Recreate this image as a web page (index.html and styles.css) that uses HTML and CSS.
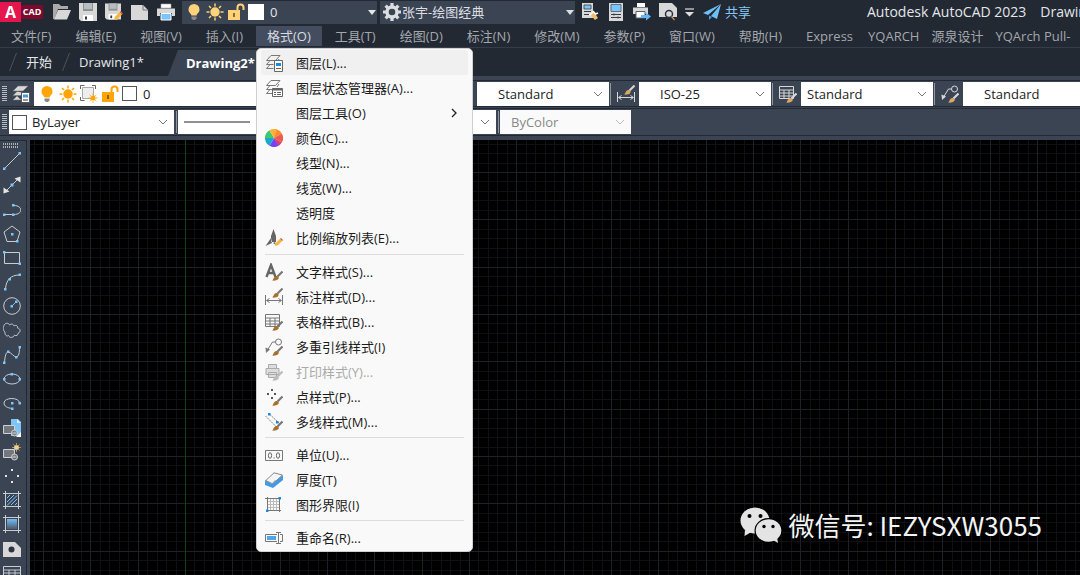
FILE: index.html
```
<!DOCTYPE html>
<html lang="zh-CN">
<head>
<meta charset="utf-8">
<title>Autodesk AutoCAD 2023</title>
<link rel="stylesheet" href="styles.css">
</head>
<body>
<svg class="defs" aria-hidden="true">
  <defs>
    <symbol id="brush" viewBox="0 0 18 18"><path d="M17.500 8.500L12.500 13.500" stroke="currentColor" stroke-width="2.200" fill="none"/><path d="M7 17.500c1.700-.6 1.300-4 4.300-4.600 2 0 3.200 1.600 2 3.200-1.400 1.600-4.400 1.700-6.300 1.400z" class="tan"/></symbol>
    <symbol id="bulb" viewBox="0 0 18 18"><path d="M9 1a5.500 5.500 0 0 0-5.500 5.500c0 3 2.500 3.800 3 6h5c.5-2.200 3-3 3-6A5.500 5.500 0 0 0 9 1z" fill="currentColor"/><path d="M6.500 13.500h5v2l-1.500 1.500H8l-1.500-1.500z" fill="#888"/></symbol>
    <symbol id="sun" viewBox="0 0 18 18"><circle cx="9" cy="9" r="4.700" fill="currentColor"/><path d="M9 .5v3M9 14.500v3M.5 9h3M14.500 9h3M3 3l2 2M13 13l2 2M15 3l-2 2M5 13l-2 2" stroke="currentColor" stroke-width="1.500"/></symbol>
    <symbol id="lock" viewBox="0 0 18 18"><path d="M1 7h12v10H1z" fill="currentColor"/><path d="M10.500 7V4.500a3 3 0 0 1 6 0V7" fill="none" stroke="currentColor" stroke-width="2"/><path d="M7 10v4" stroke="#6b5320" stroke-width="1.600"/></symbol>
    <symbol id="chev" viewBox="0 0 10 6"><path d="M1 1l4 4 4-4" fill="none" stroke="currentColor"/></symbol>
    <symbol id="tri" viewBox="0 0 8 5"><path d="M0 0h8L4 5z" fill="currentColor"/></symbol>
    <symbol id="layers" viewBox="0 0 18 18"><path d="M6 1.500h9L10.500 6.500h-9zM5 6.500l-3.500 4h7M5 10.500l-3.500 4h7" fill="none" stroke="currentColor"/><path d="M14 5l-2 3" stroke="currentColor"/></symbol>
    <symbol id="dim" viewBox="0 0 18 18"><path d="M.5 7v10M17.500 7v10M2 12.500h14M4.500 10.500l-3 2 3 2M13.500 10.500l3 2-3 2" fill="none" stroke="currentColor"/><path d="M17.500.500l-5 5" stroke="currentColor" stroke-width="2"/><path d="M7 9.500c1.700-.6 1.400-4 4.300-4.500 2 0 3 1.600 1.800 3.200C11.800 9.700 8.800 9.800 7 9.500z" class="tan"/></symbol>
    <symbol id="table" viewBox="0 0 18 18"><path d="M.5 1.500h14v12H.5zM.5 5h14M.5 8h14M.5 11h14M5 5v8.500M10 5v8.500" fill="none" stroke="currentColor"/></symbol>
    <symbol id="mleader" viewBox="0 0 18 18"><circle cx="13.500" cy="4" r="3" fill="none" stroke="currentColor"/><path d="M10.500 4H7.500L2.500 12" fill="none" stroke="currentColor"/><path d="M.500 9.500l4.500 2-4 3.500z" fill="currentColor"/></symbol>
    <symbol id="printer" viewBox="0 0 18 18"><path d="M4 1h10v4H4z" fill="#fff" stroke="#aaa" stroke-width=".6"/><path d="M0 5.500h18V13h-3v-3H3v3H0z" fill="currentColor"/><path d="M4 10.500h10V17H4z" fill="#7ac4ff" stroke="#fff"/></symbol>
    <symbol id="block" viewBox="0 0 18 18"><path d="M.5 6.500h11v8H.5z" fill="#74777d" stroke="#d0d0d0"/><circle cx="11.500" cy="14" r="3" fill="#74777d" fill-opacity=".8" stroke="#d0d0d0"/><path d="M9.500 14h4" stroke="#d0d0d0"/></symbol>
    <symbol id="floppy" viewBox="0 0 18 18"><path d="M0 0h18v18H2l-2-2z" fill="currentColor"/><path d="M4 0h10v8H4z" fill="#8d9094"/><path d="M5 0h8v6H5z" fill="#b9bcc0"/><path d="M4 12h10v6H4z" fill="#fff"/><path d="M6 13.500h2v3H6z" fill="#333a45"/></symbol>
    <symbol id="pencil" viewBox="0 0 8 8"><path d="M0 8l.8-3L5 .8 7.200 3 3 7.200z" fill="#f5b83d"/><path d="M5 .8L6 0l2 2-.8 1z" fill="#e8484a"/></symbol>
    <pattern id="grid" x="13" y="32" width="142" height="142" patternUnits="userSpaceOnUse">
      <path d="M9.500 0v142M19.500 0v142M28.500 0v142M38.500 0v142M57.500 0v142M66.500 0v142M76.500 0v142M85.500 0v142M104.500 0v142M114.500 0v142M123.500 0v142M133.500 0v142M0 9.500h142M0 19.500h142M0 28.500h142M0 38.500h142M0 57.500h142M0 66.500h142M0 76.500h142M0 85.500h142M0 104.500h142M0 114.500h142M0 123.500h142M0 133.500h142" stroke="#0f1014"/>
      <path d="M.5 0v142M47.500 0v142M95.500 0v142M0 .5h142M0 47.500h142M0 95.500h142" stroke="#1e202a"/>
    </pattern>
    <linearGradient id="fade" x1="0" y1="0" x2="0" y2="1"><stop offset="0" stop-color="#72bdf5"/><stop offset="1" stop-color="#4f5a6a"/></linearGradient>
  </defs>
</svg>

<div class="app">
  <header class="titlebar">
    <button class="logo" aria-label="AutoCAD"><span class="logo-a">A</span><span class="logo-cad">CAD</span></button>
    <div class="quick">
      <button aria-label="打开"><svg viewBox="0 0 18 18"><path d="M0 16V1h6l2 2h7v3H5L1.500 16z" fill="#aaa"/><path d="M5 7h13l-4 9.500H1z" fill="#d8d8d8"/></svg></button>
      <button aria-label="保存"><svg><use href="#floppy"/></svg></button>
      <button aria-label="另存为"><svg viewBox="0 0 18 18"><use href="#floppy" width="16" height="17"/><use href="#pencil" x="9" y="8" width="9" height="9"/></svg></button>
      <button aria-label="新建"><svg viewBox="0 0 18 18"><path d="M0 2h12l5 5v10H0z" fill="#d8d8d8"/><path d="M12 2v5h5" fill="none" stroke="#777"/></svg></button>
      <button aria-label="打印"><svg><use href="#printer"/></svg></button>
    </div>
    <button class="combo">
      <svg class="amber"><use href="#bulb"/></svg><svg class="amber"><use href="#sun"/></svg><svg class="amber"><use href="#lock"/></svg><i class="swatch"></i><span>0</span><svg class="tri"><use href="#tri"/></svg>
    </button>
    <button class="combo workspace">
      <svg viewBox="0 0 18 18"><circle cx="9" cy="9" r="5" fill="none" stroke="currentColor" stroke-width="3.400"/><path d="M9 0v3M9 15v3M0 9h3M15 9h3M2.600 2.600l2.200 2.200M13.200 13.200l2.200 2.200M15.400 2.600l-2.200 2.200M4.800 13.200l-2.200 2.200" stroke="currentColor" stroke-width="3.200"/></svg><span>张宇-绘图经典</span><svg class="tri"><use href="#tri"/></svg>
    </button>
    <div class="quick second">
      <button aria-label="特性匹配"><svg viewBox="0 0 18 18"><path d="M1 0h11v15H1z" fill="#d8d8d8"/><path d="M3 2h7v4H3z" fill="#7ac4ff" stroke="#333a45" stroke-width=".8"/><path d="M3 8.500h7M3 11.500h5" stroke="#333a45"/><path d="M8.500 11l5.500 6 3-2-4-6z" fill="#f0c070"/><path d="M8.500 12.500l4-4 2 2.500 2.500-1" fill="none" stroke="#fff" stroke-width="1.500"/></svg></button>
      <button aria-label="特性"><svg viewBox="0 0 18 18"><path d="M2 0h14v18H2z" fill="#d8d8d8"/><path d="M4 1.500h10v7H4z" fill="#7ac4ff" stroke="#3d4a5c" stroke-width=".7"/><path d="M4 11.500h10M4 14.500h10M7 10.500v2M11 13.500v2" stroke="#333a45"/></svg></button>
      <button aria-label="批处理打印"><svg viewBox="0 0 18 18"><path d="M4 0h8v4H4z" fill="#fff"/><path d="M0 4.500h15V11H0z" fill="#d8d8d8"/><path d="M3 8.500h9V15H3z" fill="#fff" stroke="#59616d"/><path d="M8 12h5V9.500l5 4-5 4V15H8z" fill="#64b6f7"/></svg></button>
      <button aria-label="打印预览"><svg viewBox="0 0 18 18"><path d="M0 0h13l5 5v9H0z" fill="#d8d8d8"/><circle cx="10" cy="11" r="3.500" fill="#d8d8d8" stroke="#2a313c" stroke-width="1.500"/><path d="M12.500 13.500l3 3.500" stroke="#b98a53" stroke-width="1.500"/></svg></button>
      <button class="more" aria-label="更多"><svg viewBox="0 0 9 9"><path d="M0 1h9" stroke="#ddd" stroke-width="1.200"/><path d="M0 4h9L4.500 8.500z" fill="#ddd"/></svg></button>
    </div>
    <button class="share"><svg viewBox="0 0 18 18"><path d="M18 1L0 10l5 2L18 1 8 13l6 3z" fill="#6fc0f8"/><path d="M6 12.500V17l3-3z" fill="#4a9bd8"/></svg><span>共享</span></button>
    <h1>Autodesk AutoCAD 2023</h1><span class="file">Drawing</span>
  </header>

  <nav class="menubar">
    <button>文件(F)</button><button>编辑(E)</button><button>视图(V)</button><button>插入(I)</button><button class="open" aria-expanded="true">格式(O)</button><button>工具(T)</button><button>绘图(D)</button><button>标注(N)</button><button>修改(M)</button><button>参数(P)</button><button>窗口(W)</button><button>帮助(H)</button><button class="express">Express</button><button class="tight">YQARCH</button><button class="tight">源泉设计</button><button class="tight">YQArch Pull-</button>
  </nav>

  <div class="tabs">
    <svg class="slash" viewBox="0 0 8 18"><path d="M7.500 0L.5 18" stroke="#4a5361"/></svg><button class="start">开始</button>
    <svg class="slash" viewBox="0 0 8 18"><path d="M7.500 0L.5 18" stroke="#4a5361"/></svg><button class="drawing">Drawing1*</button>
    <button class="active">Drawing2*</button>
  </div>

  <div class="toolbar">
    <i class="grip"></i>
    <button class="tool" aria-label="图层特性"><svg viewBox="0 0 18 18"><path d="M6 1h10l-5 5H1zM5 6.500L1 10.500h9l2-2.500M5 11l-4 4h8" fill="#d8d8d8" stroke="#777" stroke-width=".6"/><path d="M9.500 7.500h8v10h-8z" fill="#fff" stroke="#555"/><path d="M11 9.500h5v3h-5z" fill="#3f9be5"/><path d="M11 15h5" stroke="#333"/></svg></button>
    <div class="pick layer">
      <svg class="orange"><use href="#bulb"/></svg><svg class="orange"><use href="#sun"/></svg><svg class="orange" viewBox="0 0 18 18"><path d="M2.500 2.500h11v11h-11z" fill="#eee" stroke="#aaa"/><path d="M.5 4V.500h4M12 .5h3.500V4M.5 12v3.500h4" stroke="#666" fill="none"/><use href="#sun" x="8" y="8" width="10" height="10"/></svg><svg class="orange"><use href="#lock"/></svg><i class="box"></i>
      <select aria-label="图层"><option>0</option></select>
    </div>
    <button class="tool" aria-label="文字样式"><svg viewBox="0 0 18 18"><use href="#brush"/></svg></button>
    <div class="pick style"><select aria-label="文字样式"><option>Standard</option></select><svg class="chev"><use href="#chev"/></svg></div>
    <i class="bar"></i>
    <button class="tool" aria-label="标注样式"><svg><use href="#dim"/></svg></button>
    <div class="pick style"><select aria-label="标注样式"><option>ISO-25</option></select><svg class="chev"><use href="#chev"/></svg></div>
    <i class="bar"></i>
    <button class="tool" aria-label="表格样式"><svg viewBox="0 0 18 18"><use href="#table"/><use href="#brush"/></svg></button>
    <div class="pick style near"><select aria-label="表格样式"><option>Standard</option></select><svg class="chev"><use href="#chev"/></svg></div>
    <i class="bar"></i>
    <button class="tool" aria-label="多重引线样式"><svg viewBox="0 0 18 18"><use href="#mleader"/><use href="#brush"/></svg></button>
    <div class="pick style"><select aria-label="多重引线样式"><option>Standard</option></select><svg class="chev"><use href="#chev"/></svg></div>
  </div>

  <div class="toolbar props">
    <i class="grip"></i>
    <div class="pick color"><i class="box"></i><select aria-label="颜色"><option>ByLayer</option></select><svg class="chev"><use href="#chev"/></svg></div>
    <i class="bar"></i>
    <div class="pick line"><svg viewBox="0 0 66 2"><path d="M0 1h66" stroke="#222"/></svg><select aria-label="线型"><option>ByLayer</option></select></div>
    <i class="bar"></i>
    <div class="pick line"><svg viewBox="0 0 66 2"><path d="M0 1h66" stroke="#222"/></svg><select aria-label="线宽"><option>ByLayer</option></select><svg class="chev"><use href="#chev"/></svg></div>
    <i class="bar"></i>
    <div class="pick plot"><select aria-label="打印样式" disabled><option>ByColor</option></select><svg class="chev"><use href="#chev"/></svg></div>
  </div>

  <main class="work">
    <aside class="draw">
      <svg class="flat" viewBox="0 0 16 5"><path d="M0 1h16M0 4h16" stroke="#d0d3d8" stroke-width="1.500" stroke-dasharray="1 1"/></svg>
      <div class="tools">
        <button aria-label="直线"><svg viewBox="0 0 18 18"><path d="M1.500 16.500l15-15"/><path class="dot" d="M0 15.500h2.500V18H0zM15.500 0H18v2.500h-2.500z"/></svg></button>
        <button aria-label="构造线"><svg viewBox="0 0 18 18"><path d="M2 16L16 2"/><path class="solid" d="M17.500.500v6l-6-4zM.500 17.500v-6l6 4z"/><path class="dot" d="M7.500 7.500h3v3h-3z"/></svg></button>
        <button aria-label="多段线"><svg viewBox="0 0 18 18"><path d="M1 13.500h10c9 0 9-9 0-9"/><path class="dot" d="M0 12.500h2.500V15H0zM9 12.500h2.500V15H9zM9 3h2.500v2.500H9z"/></svg></button>
        <button aria-label="多边形"><svg viewBox="0 0 18 18"><path d="M9 1l8 6-3 9.500H4L1 7z"/><path class="dot" d="M8 8h2.500v2.500H8zM13 15h2.500v2.500H13z"/></svg></button>
        <button aria-label="矩形"><svg viewBox="0 0 18 18"><path d="M1.500 3.500h15v11h-15z"/><path class="dot" d="M0 2h2.500v2.500H0zM15.500 13.500H18V16h-2.500z"/></svg></button>
        <button aria-label="圆弧"><svg viewBox="0 0 18 18"><path d="M2.500 16C3 7 8 2 16 2"/><path class="dot" d="M1 15h2.500v2.500H1zM5.500 5H8v2.500H5.500zM15.500.500H18V3h-2.500z"/></svg></button>
        <button aria-label="圆"><svg viewBox="0 0 18 18"><circle cx="9" cy="9" r="8.300"/><path d="M9 9l4-4" class="blue"/><path class="dot" d="M7.500 8H10v2.500H7.500zM12 3.500h2.500V6H12z"/></svg></button>
        <button aria-label="修订云线"><svg viewBox="0 0 18 18"><path d="M2 10C-.500 8 0 5 1.500 2.500 3 .500 6 1 6.500 3c2-1.800 4-.8 4.500 1 2-1.500 4 0 3.500 2 3 .500 3.500 4 .7 5.200 0 2-2 3-3.700 2-1.500 2.800-5 3-6 .3C3.500 15 1.500 12.500 2 10z"/></svg></button>
        <button aria-label="样条曲线"><svg viewBox="0 0 18 18"><path d="M1.500 16.500C2 10 3 6 5 6c3 0 6 5 8 5 3 0 3.500-5 3.500-9"/><path class="dot" d="M0 15.500h2.500V18H0zM4 4.500h2.500V7H4zM12 10h2.500v2.500H12zM15.500 0H18v2.500h-2.500z"/></svg></button>
        <button aria-label="椭圆"><svg viewBox="0 0 18 18"><ellipse cx="9" cy="9" rx="8" ry="5"/><path class="dot" d="M0 8h2.500v2.500H0zM15.500 8H18v2.500h-2.500zM7.500 3H10v2.500H7.500z"/></svg></button>
        <button aria-label="椭圆弧"><svg viewBox="0 0 18 18"><path d="M16.500 9c0-6-15.500-6-15.500 0 0 3 3 5 8.500 5.500"/><path class="dot" d="M15.500 8H18v2.500h-2.500zM8 8h2.500v2.500H8zM8 13.500h2.500V16H8z"/></svg></button>
        <button aria-label="插入块"><svg viewBox="0 0 18 18"><path d="M8 0h7l3 3v14H8z" fill="#7cc5fb" stroke="none"/><path d="M14 0l4 4h-4z" fill="#d7eeff" stroke="none"/><use href="#block"/><path d="M18 13v5h-5z" fill="#fff" stroke="none"/></svg></button>
        <button aria-label="创建块"><svg viewBox="0 0 18 18"><use href="#block"/><g class="amber"><use href="#sun" x="9" y="0" width="9" height="9"/></g></svg></button>
        <button aria-label="点"><svg viewBox="0 0 18 18"><path class="solid" d="M8 2h2v2H8zM8 14h2v2H8zM2 8h2v2H2zM14 8h2v2h-2z"/></svg></button>
        <button aria-label="图案填充"><svg viewBox="0 0 18 18"><path d="M0 2.500h18M0 15.500h18M2.500 0v18M15.500 0v18"/><path class="blue" d="M4 7l3-3M4 11l7-7M4 14.500L14 4.500M8 14l6-6M12 14l2-2"/></svg></button>
        <button aria-label="渐变色"><svg viewBox="0 0 18 18"><path d="M4 4h10v10H4z" fill="url(#fade)" stroke="none"/><path d="M0 2.500h18M0 15.500h18M2.500 0v18M15.500 0v18"/></svg></button>
        <button aria-label="面域"><svg viewBox="0 0 18 18"><path d="M0 2h12l6 6v9H0z" fill="#d8d8d8" stroke="none"/><circle cx="8.500" cy="9.500" r="3" fill="#2c3440" stroke="none"/></svg></button>
        <button aria-label="表格"><svg viewBox="0 0 18 18"><path d="M.500 2.500h17v14H.5zM0 6h18M0 9h18M0 12.500h18M6 6v10M12 6v10"/></svg></button>
      </div>
    </aside>
    <section class="canvas">
      <svg class="sheet" aria-hidden="true"><rect width="100%" height="100%" fill="url(#grid)"/><path d="M155.500 0v2000" stroke="#164015"/></svg>
      <div class="watermark">
        <svg viewBox="0 0 42 36"><ellipse cx="15" cy="13.500" rx="14.500" ry="13" fill="#e4e4e4"/><path d="M5 23l-.5 6 7-4z" fill="#e4e4e4"/><ellipse cx="28.500" cy="23.500" rx="14" ry="12.500" fill="#000"/><ellipse cx="28.500" cy="23.500" rx="12.800" ry="11.300" fill="#e4e4e4"/><path d="M33 33l5 3-1-6z" fill="#e4e4e4"/><circle cx="9.500" cy="9" r="2"/><circle cx="20.500" cy="9" r="2"/><circle cx="24" cy="19.500" r="1.700"/><circle cx="33" cy="19.500" r="1.700"/></svg>
        <span>微信号: IEZYSXW3055</span>
      </div>
    </section>
  </main>

  <div class="menu" role="menu">
    <div class="group tall">
      <button class="hover"><svg viewBox="0 0 18 18"><use href="#layers"/><path d="M9.500 6.500h8v11h-8z" fill="#fff" stroke="#666"/><path d="M11 9h5v3h-5z" fill="#1a8ae0"/><path d="M11 14.500h5" stroke="#666"/></svg>图层(L)...</button>
      <button><svg viewBox="0 0 18 18"><use href="#layers"/><path d="M7.500 9.500h10v8h-10z" fill="#fff" stroke="#666"/><path d="M7.500 10.500h10" stroke="#666" stroke-width="2"/><path d="M9 13.500h2M12 13.500h4M9 15.500h2M12 15.500h4" stroke="#666"/></svg>图层状态管理器(A)...</button>
      <button><svg></svg>图层工具(O)<svg class="arrow" viewBox="0 0 6 10"><path d="M1 1l4 4-4 4" fill="none" stroke="#222" stroke-width="1.300"/></svg></button>
      <button><svg viewBox="0 0 18 18"><path d="M9 9V0a9 9 0 0 1 7.800 4.500z" fill="#ff8a33"/><path d="M9 9l7.800-4.500a9 9 0 0 1 0 9z" fill="#ee5a50"/><path d="M9 9l7.800 4.500A9 9 0 0 1 13 17z" fill="#dd3f68"/><path d="M9 9l4.500 7.800a9 9 0 0 1-9 0z" fill="#7740f5"/><path d="M9 9l-4.500 7.800A9 9 0 0 1 0 9z" fill="#18a8cc"/><path d="M9 9H0a9 9 0 0 1 4.500-7.800z" fill="#3fc870"/><path d="M9 9L4.500 1.200A9 9 0 0 1 12 .5z" fill="#fbb336"/></svg>颜色(C)...</button>
      <button><svg></svg>线型(N)...</button>
      <button><svg></svg>线宽(W)...</button>
      <button><svg></svg>透明度</button>
      <button><svg viewBox="0 0 18 18"><path d="M8.500 0L11 7v6H6V7zM6 9l-5.500 8L7 14zM10 13l1 3-3-2z" fill="#666"/><use href="#pencil" x="10" y="9" width="8" height="8"/></svg>比例缩放列表(E)...</button>
    </div>
    <hr>
    <div class="group">
      <button><svg viewBox="0 0 18 18"><path d="M1.500 14L6 2l4.500 12M3 10h6" fill="none" stroke="#666" stroke-width="2.400"/><use href="#brush"/></svg>文字样式(S)...</button>
      <button><svg><use href="#dim"/></svg>标注样式(D)...</button>
      <button><svg viewBox="0 0 18 18"><use href="#table"/><use href="#brush"/></svg>表格样式(B)...</button>
      <button><svg viewBox="0 0 18 18"><use href="#mleader"/><use href="#brush"/></svg>多重引线样式(I)</button>
      <button disabled><svg viewBox="0 0 18 18"><path d="M3.500 1.500h8v4h-8zM1 5.500h13v6H1zM3.500 9.500h8v5h-8z" fill="#ddd" stroke="#aaa"/><use href="#brush"/></svg>打印样式(Y)...</button>
      <button><svg viewBox="0 0 18 18"><path d="M6 1h2v2H6zM2 5h2v2H2zM9 5h2v2H9zM6 9h2v2H6z" fill="#555"/><use href="#brush"/></svg>点样式(P)...</button>
      <button><svg viewBox="0 0 18 18"><path d="M.5 3l13 13M5 1.500L15 11" stroke="#888" stroke-dasharray="2 .7"/><path d="M3 0h2.500v2.500H3zM11 8h2.500v2.500H11z" fill="#1a8ae0"/><use href="#brush"/></svg>多线样式(M)...</button>
    </div>
    <hr>
    <div class="group">
      <button><svg viewBox="0 0 18 18"><path d="M.5 4.500h17v10H.5z" fill="none" stroke="#777"/><ellipse cx="5" cy="9.500" rx="1.600" ry="2.800" fill="none" stroke="#666"/><ellipse cx="13" cy="9.500" rx="1.600" ry="2.800" fill="none" stroke="#666"/><path d="M8.500 12h1.200" stroke="#666"/></svg>单位(U)...</button>
      <button><svg viewBox="0 0 18 18"><path d="M0 9l7 4L18 4v5L8 17l-8-3z" fill="#3f9be5"/><path d="M.8 9.500L9 1.800l8.300 2.200-6.300 6c-1.500-.5-3 1-3 3z" fill="#f5f5f5" stroke="#888"/></svg>厚度(T)</button>
      <button><svg viewBox="0 0 18 18"><path d="M2.500 1v15M0 2.500h16M14.500 2v14M1 14.500h15" stroke="#777"/><path d="M5.500 3v11M8.500 3v11M11.500 3v11M3 5.500h11M3 8.500h11M3 11.500h11" stroke="#bbb"/><path d="M13.500 1H16v2.500h-2.500zM1 13.500h2.500V16H1z" fill="#1a8ae0"/></svg>图形界限(I)</button>
    </div>
    <hr>
    <div class="group">
      <button><svg viewBox="0 0 18 18"><path d="M12 5.500H.500v7H12M15 5.500h2.500v7H15M11 3.500h5M11 14.500h5M13.500 3.500v11" fill="none" stroke="#777"/><path d="M2 7h9v4H2z" fill="#4fa5e8"/></svg>重命名(R)...</button>
    </div>
  </div>
</div>
</body>
</html>
```
FILE: styles.css
```
* { box-sizing: border-box; }

body {
  --brush: #dba766;
  margin: 0;
  background: #3b4453;
  color: #e4e6e9;
  font: 13px/20px "Open Sans", "Noto Sans CJK SC", sans-serif;
}

button, select {
  margin: 0;
  padding: 0;
  border: 0;
  background: none;
  color: inherit;
  font: inherit;
  white-space: nowrap;
}

svg { display: block; flex: none; width: 18px; height: 18px; }
.defs { position: absolute; width: 0; height: 0; }
.tan { fill: var(--brush); }
.amber { color: #ffd27a; }
.orange { color: #ffa50a; }

.app {
  position: relative;
  display: flex;
  flex-direction: column;
  height: 100vh;
  overflow: hidden;
}

/* Title bar */
.titlebar {
  display: flex;
  flex: none;
  align-items: center;
  height: 24px;
  background: #222933;
  white-space: nowrap;
}
.titlebar > * { flex: none; }

.logo { display: flex; align-items: center; height: 20px; color: #fff; font-weight: 700; }
.logo-a { width: 21px; height: 20px; background: #e5154e; font-size: 16px; }
.logo-cad { width: 22px; height: 14px; background: #7d0a2c; font-size: 9px; line-height: 14px; }

.quick { display: flex; gap: 8px; margin-left: 10px; color: #d8d8d8; }

.combo {
  display: flex;
  align-items: center;
  gap: 3px;
  width: 195px;
  height: 23px;
  margin-left: 7px;
  padding: 0 1px 0 3px;
  background: #3b4453;
}
.combo span { margin-left: 3px; }
.combo .swatch { width: 16px; height: 16px; background: #fff; }
.combo .tri { width: 8px; height: 5px; margin-left: auto; }
.workspace { margin-left: 3px; gap: 0; color: #dcdee2; }
.workspace span { margin-left: 1px; }

.second { margin-left: 6px; }
.more { display: flex; align-items: center; }
.more svg { width: 9px; height: 9px; }
.share { display: flex; align-items: center; gap: 4px; margin-left: 9px; color: #85c6f2; }
h1, .file { font: inherit; font-size: 14px; }
h1 { margin: 0 14px 0 116px; }

/* Menu bar */
.menubar {
  display: flex;
  flex: none;
  align-items: center;
  gap: 2px;
  height: 24px;
  border-bottom: 1px solid #343d4b;
  background: #222933;
  color: #a3a7ad;
}
.menubar button { height: 20px; padding: 0 11px; }
.menubar .express { padding-right: 8px; }
.menubar .tight { padding: 0 5px; }
.menubar .open { background: #434d5f; color: #d8dbe0; }

/* Drawing tabs */
.tabs {
  display: flex;
  flex: none;
  align-items: center;
  height: 28px;
  padding-left: 9px;
  background: #222933;
}
.slash { width: 8px; }
.start { margin: 0 10px 0 9px; }
.drawing { margin: 0 24px 0 9px; }
.active {
  height: 26px;
  align-self: flex-end;
  padding: 0 20px 0 18px;
  background: #3b4453;
  clip-path: polygon(10px 0, 100% 0, 100% 100%, 0 100%);
  color: #fff;
  font-weight: 700;
}

/* Toolbars */
.toolbar {
  display: flex;
  flex: none;
  align-items: center;
  height: 27px;
  margin-top: 4px;
  border-top: 1px solid #222933;
  border-bottom: 1px solid #222933;
  color: #d8d8d8;
}
.props { height: 28px; margin-top: 1px; }
.grip {
  flex: none;
  width: 5px;
  height: 16px;
  margin-left: 2px;
  background: repeating-linear-gradient(#b8bcc2 0 1px, transparent 1px 2px);
}
.tool { display: flex; flex: none; justify-content: center; width: 27px; }
.bar { flex: none; width: 1px; height: 22px; margin: 0 1px; background: #9096a0; }
.props .bar { margin: 0 1px 0 2px; }

.pick {
  position: relative;
  display: flex;
  flex: none;
  align-items: center;
  height: 24px;
  background: #fff;
  color: #222;
}
.pick select { flex: 1; min-width: 0; height: 24px; appearance: none; }
.pick .chev { position: absolute; right: 6px; width: 10px; height: 6px; color: #777; }
.box { flex: none; width: 15px; height: 15px; border: 1px solid #555; background: #fff; }

.layer { width: 416px; gap: 3px; padding-left: 4px; }
.layer select { padding-left: 3px; }
.style { width: 132px; }
.style select { padding-left: 21px; }
.near select { padding-left: 6px; }
.color { width: 165px; margin-left: 2px; padding-left: 3px; }
.color select { padding-left: 5px; }
.line { width: 157px; padding-left: 6px; }
.line > svg:first-child { width: 66px; height: 2px; }
.line select { padding-left: 8px; }
.plot { width: 131px; background: #fafafa; color: #888; }
.plot select { padding-left: 11px; opacity: 1; color: #888; }
.plot .chev { color: #bbb; }

/* Work area */
.work { display: flex; flex: 1; min-height: 0; margin-top: 4px; }
.draw {
  flex: none;
  width: 27px;
  margin-right: 3px;
  overflow: hidden;
  border-top: 1px solid #222933;
  border-right: 1px solid #222933;
}
.flat { width: 16px; height: 5px; margin: 2px 0 1px 3px; }
.tools { display: grid; grid-auto-rows: 1fr; height: 436px; padding-left: 3px; }
.tools button { display: flex; align-items: center; }
.tools svg { fill: none; stroke: #c9ccd1; }
.tools .dot { fill: #7ac4ff; stroke: none; }
.tools .blue { stroke: #7ac4ff; }
.tools .solid { fill: #e4e4e4; stroke: none; }

.canvas { position: relative; flex: 1; overflow: hidden; background: #000; }
.sheet { width: 100%; height: 100%; }
.watermark {
  position: absolute;
  right: 38px;
  bottom: 32px;
  display: flex;
  align-items: center;
  gap: 6px;
  color: #f4f4f4;
  font: 26px/36px "Noto Sans CJK SC", sans-serif;
  white-space: nowrap;
}
.watermark svg { width: 42px; height: 36px; }

/* Format menu */
.menu {
  --brush: #a8702e;
  position: absolute;
  top: 48px;
  left: 256px;
  width: 217px;
  padding: 1px 4px;
  border: 1px solid #d0d0d0;
  border-radius: 5px;
  background: #f9f9f9;
  color: #1c1c1c;
}
.group { display: grid; grid-auto-rows: 25px; }
.tall { grid-auto-rows: 1fr; height: 201px; }
.group button {
  display: flex;
  align-items: center;
  gap: 13px;
  padding-left: 4px;
  border-radius: 3px;
}
.group svg { color: #777; }
.group .hover { background: #f0f0f0; }
.group button:disabled { --brush: #bbb; color: #aaa; }
.group button:disabled svg { color: #bbb; }
.group .arrow { width: 6px; height: 10px; margin: 0 11px 0 auto; }
hr { height: 1px; margin: 3px 4px 4px; border: 0; background: #dcdcdc; }
```
